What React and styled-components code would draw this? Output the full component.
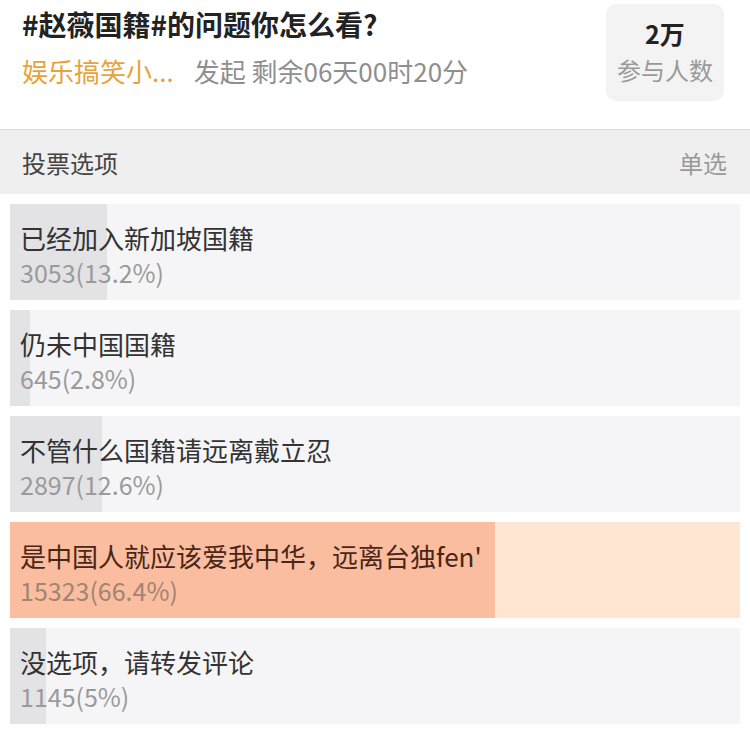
import styled, { createGlobalStyle } from "styled-components";

const Global = createGlobalStyle`
  body {
    margin: 0;
    background: #fff;
    font-family: "Noto Sans CJK SC", "Noto Sans", sans-serif;
  }
`;

const Page = styled.div`
  width: 750px;
`;

const Top = styled.div`
  display: flex;
  justify-content: space-between;
  align-items: flex-start;
  height: 125px;
  padding: 4px 26px 0 22px;
`;

const Info = styled.div`
  padding-top: 1px;
`;

const Title = styled.div`
  font-size: 28px;
  line-height: 38px;
  font-weight: 700;
  color: #222;
`;

const Meta = styled.div`
  margin-top: 10px;
  font-size: 26px;
  line-height: 36px;
  color: #8f8f8f;
`;

const Author = styled.span`
  color: #e9a23b;
  margin-right: 20px;
`;

const Stats = styled.div`
  width: 118px;
  height: 97px;
  border-radius: 10px;
  background: #f3f3f3;
  display: flex;
  flex-direction: column;
  align-items: center;
  padding-top: 12px;
  box-sizing: border-box;
`;

const StatNum = styled.div`
  font-size: 25px;
  line-height: 34px;
  font-weight: 700;
  color: #222;
`;

const StatLabel = styled.div`
  margin-top: 3px;
  font-size: 24px;
  line-height: 34px;
  color: #999;
`;

const Header = styled.div`
  display: flex;
  justify-content: space-between;
  align-items: center;
  height: 64px;
  padding: 0 23px 0 22px;
  background: #efefef;
  border-top: 1px solid #dcdcdc;
  font-size: 24px;
  color: #444;
`;

const Mode = styled.span`
  color: #999;
`;

const List = styled.div`
  display: flex;
  flex-direction: column;
  gap: 10px;
  padding: 10px 10px;
`;

const Option = styled.div`
  height: 96px;
  box-sizing: border-box;
  padding: 16px 10px 0;
  background: linear-gradient(
    to right,
    ${(p) => (p.$on ? "#fbbd9f" : "#e3e3e5")} 0 ${(p) => p.$pct}%,
    ${(p) => (p.$on ? "#fee6d2" : "#f5f5f7")} ${(p) => p.$pct}% 100%
  );
`;

const Name = styled.div`
  font-size: 26px;
  line-height: 36px;
  color: ${(p) => (p.$on ? "#4a2618" : "#333")};
`;

const Count = styled.div`
  font-size: 25px;
  line-height: 32px;
  color: ${(p) => (p.$on ? "#a08474" : "#9a9a9a")};
`;

const options = [
  { name: "已经加入新加坡国籍", count: "3053(13.2%)", pct: 13.3 },
  { name: "仍未中国国籍", count: "645(2.8%)", pct: 2.8 },
  { name: "不管什么国籍请远离戴立忍", count: "2897(12.6%)", pct: 12.6 },
  { name: "是中国人就应该爱我中华，远离台独fen'", count: "15323(66.4%)", pct: 66.4, on: true },
  { name: "没选项，请转发评论", count: "1145(5%)", pct: 4.9 },
];

export default function App() {
  return (
    <Page>
      <Global />
      <Top>
        <Info>
          <Title>#赵薇国籍#的问题你怎么看?</Title>
          <Meta>
            <Author>娱乐搞笑小...</Author>发起 剩余06天00时20分
          </Meta>
        </Info>
        <Stats>
          <StatNum>2万</StatNum>
          <StatLabel>参与人数</StatLabel>
        </Stats>
      </Top>
      <Header>
        <span>投票选项</span>
        <Mode>单选</Mode>
      </Header>
      <List>
        {options.map((o) => (
          <Option key={o.name} $pct={o.pct} $on={o.on}>
            <Name $on={o.on}>{o.name}</Name>
            <Count $on={o.on}>{o.count}</Count>
          </Option>
        ))}
      </List>
    </Page>
  );
}
